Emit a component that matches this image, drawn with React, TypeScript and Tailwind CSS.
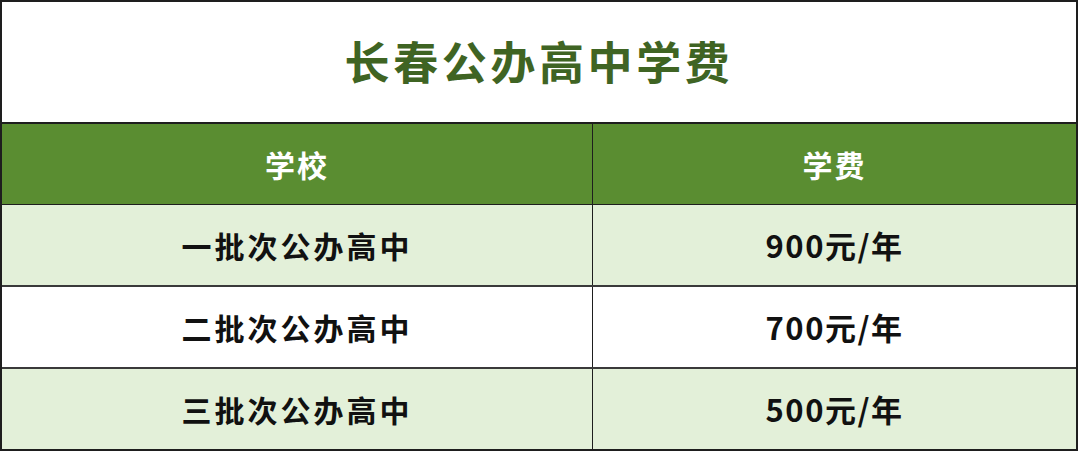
import React from "react";

const font = { fontFamily: '"Noto Sans CJK SC", "Noto Sans", sans-serif' };

const rows = [
  { name: "一批次公办高中", fee: "900元/年", bg: "bg-[#e3f0d9]", h: "h-[82px] border-b-2" },
  { name: "二批次公办高中", fee: "700元/年", bg: "bg-white", h: "h-[82px] border-b-2" },
  { name: "三批次公办高中", fee: "500元/年", bg: "bg-[#e3f0d9]", h: "h-[80px]" },
];

export default function App() {
  return (
    <div className="w-[1080px] h-[452px] bg-white" style={font}>
      <div className="w-[1078px] h-[451px] border-2 border-[#1e1e1e] flex flex-col">
        <div className="h-[122px] shrink-0 flex items-center justify-center border-b-2 border-[#1e1e1e]">
          <span className="text-[45px] font-bold text-[#3f6423] tracking-[3.6px] leading-none pb-[4px]">
            长春公办高中学费
          </span>
        </div>
        <div className="h-[81px] shrink-0 flex bg-[#5a8d31] border-b border-[#1e1e1e] text-white text-[30px] font-bold">
          <div className="w-[591px] flex items-center justify-center border-r border-[#1e1e1e] tracking-[2px]">学校</div>
          <div className="flex-1 flex items-center justify-center tracking-[2px]">学费</div>
        </div>
        {rows.map((r, i) => (
          <div
            key={i}
            className={`${r.h} shrink-0 flex ${r.bg} border-[#3a3a3a] text-[#111] text-[30px] font-bold`}
          >
            <div className="w-[591px] flex items-center justify-center border-r border-[#1e1e1e] tracking-[3px]">{r.name}</div>
            <div className="flex-1 flex items-center justify-center text-[31px] tracking-[1.5px]">{r.fee}</div>
          </div>
        ))}
      </div>
    </div>
  );
}
